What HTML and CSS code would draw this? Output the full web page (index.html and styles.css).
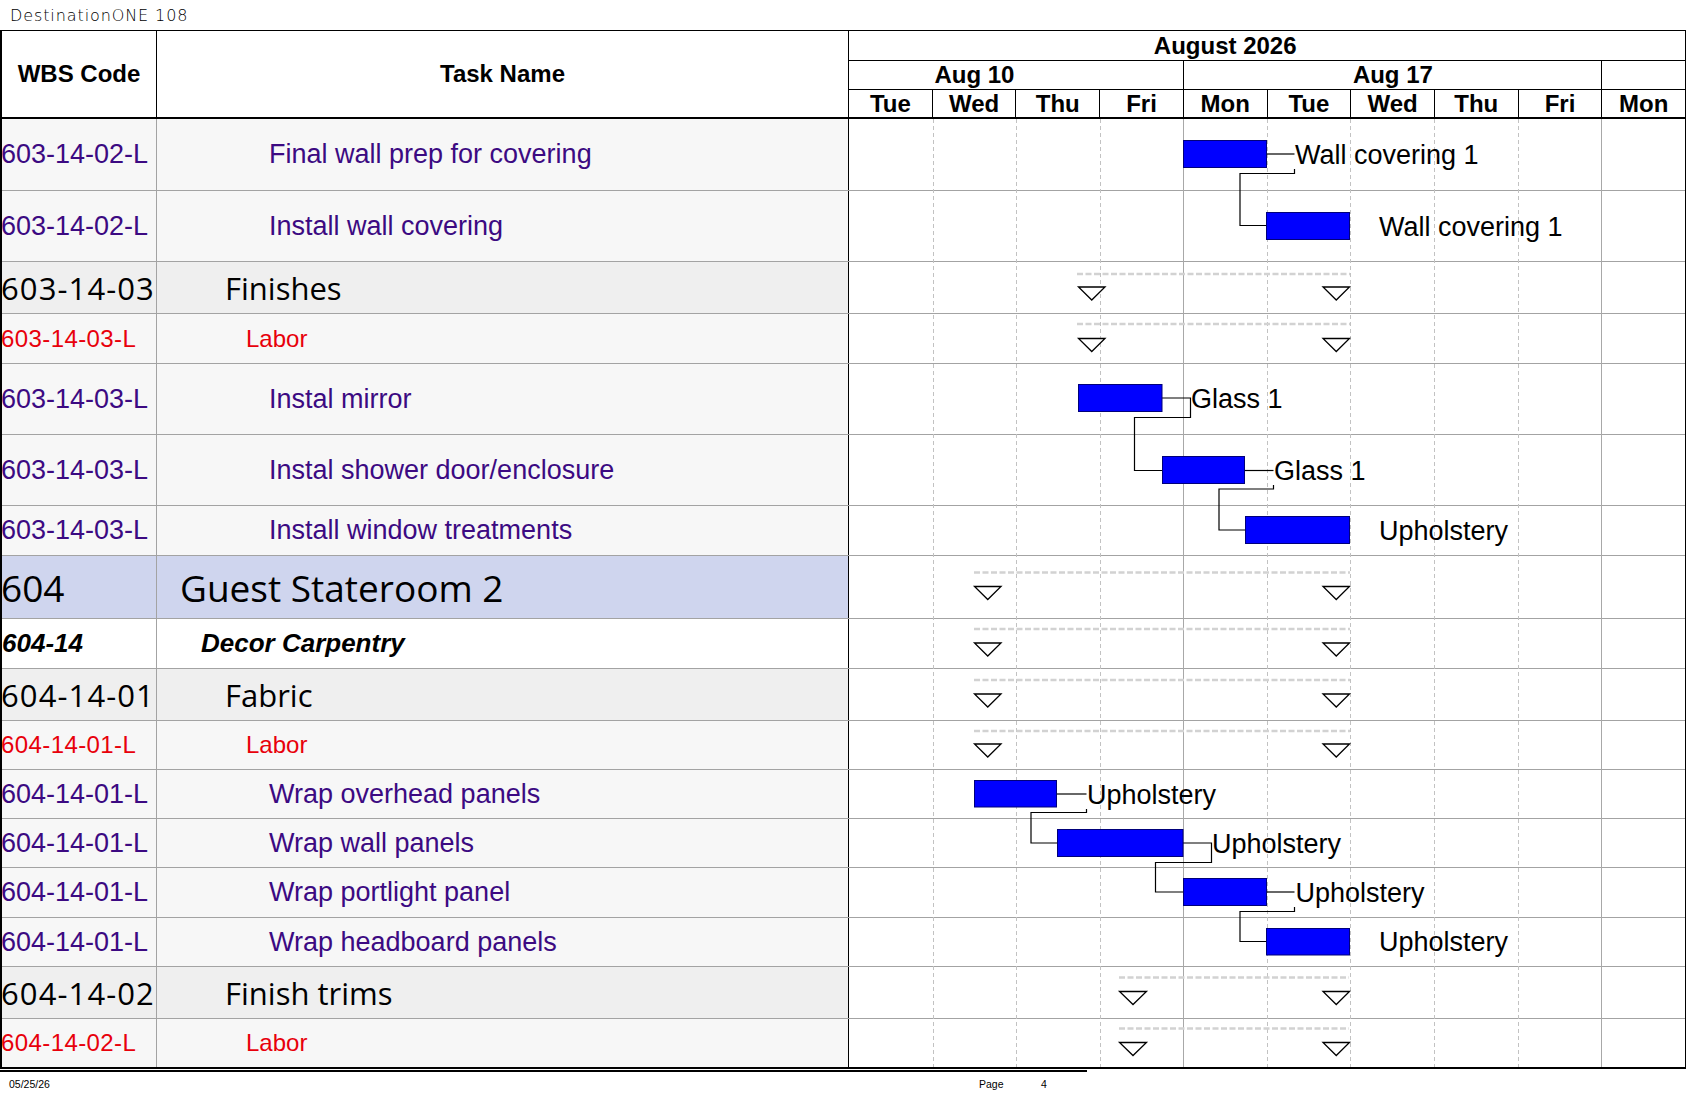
FILE: index.html
```html
<!DOCTYPE html>
<html>
<head>
<meta charset="utf-8">
<title>DestinationONE 108</title>
<link rel="stylesheet" href="styles.css">
</head>
<body>
<div class="title">DestinationONE 108</div>
<div class="sheet">
  <div class="head">
    <div class="h-wbs">WBS Code</div>
    <div class="h-task">Task Name</div>
    <div class="h-gantt">
      <div class="h-month"><div class="month">August 2026</div><div class="month-rest"></div></div>
      <div class="h-week"><div class="week w1">Aug 10</div><div class="week w2">Aug 17</div><div class="week w3"></div></div>
      <div class="h-days">
        <div class="day">Tue</div><div class="day">Wed</div><div class="day">Thu</div><div class="day">Fri</div><div class="day">Mon</div>
        <div class="day">Tue</div><div class="day">Wed</div><div class="day">Thu</div><div class="day">Fri</div><div class="day">Mon</div>
      </div>
    </div>
  </div>
  <div class="rows">
    <div class="row t-task h72"><div class="c-wbs">603-14-02-L</div><div class="c-task">Final wall prep for covering</div><div class="c-gantt"></div></div>
    <div class="row t-task h71"><div class="c-wbs">603-14-02-L</div><div class="c-task">Install wall covering</div><div class="c-gantt"></div></div>
    <div class="row t-l3 h52"><div class="c-wbs">603-14-03</div><div class="c-task">Finishes</div><div class="c-gantt"></div></div>
    <div class="row t-labor h50"><div class="c-wbs">603-14-03-L</div><div class="c-task">Labor</div><div class="c-gantt"></div></div>
    <div class="row t-task h71"><div class="c-wbs">603-14-03-L</div><div class="c-task">Instal mirror</div><div class="c-gantt"></div></div>
    <div class="row t-task h71"><div class="c-wbs">603-14-03-L</div><div class="c-task">Instal shower door/enclosure</div><div class="c-gantt"></div></div>
    <div class="row t-task h50"><div class="c-wbs">603-14-03-L</div><div class="c-task">Install window treatments</div><div class="c-gantt"></div></div>
    <div class="row t-l1 h63"><div class="c-wbs">604</div><div class="c-task">Guest Stateroom 2</div><div class="c-gantt"></div></div>
    <div class="row t-l2 h50"><div class="c-wbs">604-14</div><div class="c-task">Decor Carpentry</div><div class="c-gantt"></div></div>
    <div class="row t-l3 h52"><div class="c-wbs">604-14-01</div><div class="c-task">Fabric</div><div class="c-gantt"></div></div>
    <div class="row t-labor h49"><div class="c-wbs">604-14-01-L</div><div class="c-task">Labor</div><div class="c-gantt"></div></div>
    <div class="row t-task h49"><div class="c-wbs">604-14-01-L</div><div class="c-task">Wrap overhead panels</div><div class="c-gantt"></div></div>
    <div class="row t-task h49"><div class="c-wbs">604-14-01-L</div><div class="c-task">Wrap wall panels</div><div class="c-gantt"></div></div>
    <div class="row t-task h50"><div class="c-wbs">604-14-01-L</div><div class="c-task">Wrap portlight panel</div><div class="c-gantt"></div></div>
    <div class="row t-task h49"><div class="c-wbs">604-14-01-L</div><div class="c-task">Wrap headboard panels</div><div class="c-gantt"></div></div>
    <div class="row t-l3 h52"><div class="c-wbs">604-14-02</div><div class="c-task">Finish trims</div><div class="c-gantt"></div></div>
    <div class="row t-labor h48 last"><div class="c-wbs">604-14-02-L</div><div class="c-task">Labor</div><div class="c-gantt"></div></div>

    <svg class="chart" width="836" height="948" viewBox="0 0 836 948" xmlns="http://www.w3.org/2000/svg">
      <g class="grid-dash" stroke="#c2c2c2" stroke-width="1" stroke-dasharray="4 3">
        <line x1="84.5" y1="0" x2="84.5" y2="948"/>
        <line x1="167.5" y1="0" x2="167.5" y2="948"/>
        <line x1="251.5" y1="0" x2="251.5" y2="948"/>
        <line x1="418.5" y1="0" x2="418.5" y2="948"/>
        <line x1="501.5" y1="0" x2="501.5" y2="948"/>
        <line x1="585.5" y1="0" x2="585.5" y2="948"/>
        <line x1="669.5" y1="0" x2="669.5" y2="948"/>
      </g>
      <g stroke="#a8a8a8" stroke-width="1">
        <line x1="334.5" y1="0" x2="334.5" y2="948"/>
        <line x1="752.5" y1="0" x2="752.5" y2="948"/>
      </g>

      <g fill="none" stroke="#d2d2d2" stroke-width="2.5" stroke-dasharray="6 2.5">
        <line x1="228" y1="155" x2="501" y2="155"/>
        <line x1="228" y1="205" x2="501" y2="205"/>
        <line x1="125" y1="453.5" x2="501" y2="453.5"/>
        <line x1="125" y1="510" x2="501" y2="510"/>
        <line x1="125" y1="561" x2="501" y2="561"/>
        <line x1="125" y1="612" x2="501" y2="612"/>
        <line x1="270" y1="858.5" x2="500" y2="858.5"/>
        <line x1="270" y1="909.5" x2="500" y2="909.5"/>
      </g>

      <g fill="#fff" stroke="#000" stroke-width="1.3" stroke-linejoin="miter">
        <polygon points="229.5,168 256,168 242.75,181"/>
        <polygon points="474,168 500.5,168 487.25,181"/>
        <polygon points="229.5,219.5 256,219.5 242.75,232.5"/>
        <polygon points="474,219.5 500.5,219.5 487.25,232.5"/>
        <polygon points="125.5,467.5 152,467.5 138.75,480.5"/>
        <polygon points="474,467.5 500.5,467.5 487.25,480.5"/>
        <polygon points="125.5,524 152,524 138.75,537"/>
        <polygon points="474,524 500.5,524 487.25,537"/>
        <polygon points="125.5,575 152,575 138.75,588"/>
        <polygon points="474,575 500.5,575 487.25,588"/>
        <polygon points="125.5,625 152,625 138.75,638"/>
        <polygon points="474,625 500.5,625 487.25,638"/>
        <polygon points="270.5,872.5 297.5,872.5 284,885.5"/>
        <polygon points="474,872.5 500.5,872.5 487.25,885.5"/>
        <polygon points="270.5,923.5 297.5,923.5 284,936.5"/>
        <polygon points="474,923.5 500.5,923.5 487.25,936.5"/>
      </g>

      <g fill="none" stroke="#000" stroke-width="1.2">
        <path d="M417.5 35 H445.5"/>
        <path d="M445.5 50 V54.5 H391 V106.5 H417.5"/>
        <path d="M313 279 H341.5 V298.5 H285.5 V351.5 H313.5"/>
        <path d="M395.5 351.5 H424.5"/>
        <path d="M424.5 366 V370 H370 V411 H396.5"/>
        <path d="M207.5 675 H237.5"/>
        <path d="M237.5 690 V693.5 H182 V724 H208.5"/>
        <path d="M334 724 H362.5 V743.5 H306.5 V773 H334.5"/>
        <path d="M417.5 773 H445.5"/>
        <path d="M445.5 788 V792.5 H391 V822.5 H417.5"/>
      </g>

      <g fill="#0000ff" stroke="#00007a" stroke-width="1">
        <rect x="334.5" y="21.5" width="83" height="27"/>
        <rect x="417.5" y="93.5" width="83" height="27"/>
        <rect x="229.5" y="265.5" width="83.5" height="27"/>
        <rect x="313.5" y="337.5" width="82" height="27"/>
        <rect x="396.5" y="397.5" width="104" height="27"/>
        <rect x="125.5" y="661.5" width="82" height="26.5"/>
        <rect x="208.5" y="710.5" width="125.5" height="27"/>
        <rect x="334.5" y="759.5" width="83" height="27"/>
        <rect x="417.5" y="809.5" width="83" height="26.5"/>
      </g>

      <g class="labels" fill="#000">
        <text x="446" y="44.5">Wall covering 1</text>
        <text x="530" y="117">Wall covering 1</text>
        <text x="342" y="288.5">Glass 1</text>
        <text x="425" y="361">Glass 1</text>
        <text x="530" y="421">Upholstery</text>
        <text x="238" y="684.5">Upholstery</text>
        <text x="363" y="733.5">Upholstery</text>
        <text x="446.5" y="782.5">Upholstery</text>
        <text x="530" y="832">Upholstery</text>
      </g>
    </svg>
  </div>
</div>
<div class="footer">
  <span class="f-date">05/25/26</span>
  <span class="f-page">Page</span>
  <span class="f-num">4</span>
</div>
</body>
</html>
```

FILE: styles.css
```css
html, body {
  margin: 0;
  padding: 0;
  background: #ffffff;
}

body {
  font-family: "Liberation Sans", Arial, sans-serif;
  color: #000;
  width: 1687px;
}

.title {
  height: 29px;
  padding-top: 1px;
  padding-left: 10px;
  font-family: "DejaVu Sans", sans-serif;
  font-weight: 200;
  font-size: 16px;
  letter-spacing: 0.9px;
  line-height: 30px;
  color: #000;
  box-sizing: content-box;
}

.sheet {
  width: 1686px;
  box-sizing: border-box;
  border-top: 1px solid #000;
  border-left: 2px solid #000;
  border-right: 1px solid #000;
  border-bottom: 2px solid #000;
}

/* ---------- header ---------- */
.head {
  display: flex;
  height: 88px;
  box-sizing: border-box;
  border-bottom: 2px solid #000;
  font-weight: bold;
  font-size: 24px;
}

.h-wbs,
.h-task {
  display: flex;
  align-items: center;
  justify-content: center;
  box-sizing: border-box;
  border-right: 1px solid #000;
}

.h-wbs { width: 155px; }
.h-task { width: 692px; }

.h-gantt {
  flex: 1;
  display: flex;
  flex-direction: column;
}

.h-month,
.h-week,
.h-days {
  display: flex;
  box-sizing: border-box;
}

.h-month {
  height: 30px;
  border-bottom: 1px solid #000;
}

.month {
  width: 752.4px;
  display: flex;
  align-items: center;
  justify-content: center;
}

.month-rest { flex: 1; }

.h-week {
  height: 29px;
  border-bottom: 1px solid #000;
}

.week {
  display: flex;
  align-items: center;
  justify-content: center;
  box-sizing: border-box;
}

.w1 {
  width: 334.4px;
  padding-right: 83.6px;
}

.w2 {
  width: 418px;
  border-left: 1px solid #000;
}

.w3 {
  flex: 1;
  border-left: 1px solid #000;
}

.h-days { height: 27px; }

.day {
  flex: 1 1 0;
  display: flex;
  align-items: center;
  justify-content: center;
  box-sizing: border-box;
  border-left: 1px solid #000;
}

.day:first-child { border-left: none; }

/* ---------- body rows ---------- */
.rows {
  position: relative;
}

.row {
  display: flex;
  box-sizing: border-box;
  border-bottom: 1px solid #a3a3a3;
}

.row.last { border-bottom: none; }

.h72 { height: 72px; }
.h71 { height: 71px; }
.h63 { height: 63px; }
.h52 { height: 52px; }
.h50 { height: 50px; }
.h49 { height: 49px; }
.h48 { height: 48px; }

.c-wbs,
.c-task {
  display: flex;
  align-items: center;
  box-sizing: border-box;
  overflow: hidden;
  white-space: nowrap;
}

.c-wbs {
  width: 155px;
  border-right: 1px solid #a3a3a3;
}

.c-task {
  width: 692px;
  border-right: 1px solid #000;
}

.c-gantt {
  flex: 1;
  background: #fff;
}

/* task rows */
.t-task .c-wbs,
.t-task .c-task {
  background: #f7f7f7;
  color: #3c0a82;
  font-size: 27px;
}

.t-task .c-wbs {
  text-indent: -1px;
}

.t-task .c-task { padding-left: 112px; }

/* labor rows */
.t-labor .c-wbs,
.t-labor .c-task {
  background: #f7f7f7;
  color: #e8000b;
  font-size: 24px;
}

.t-labor .c-wbs {
  letter-spacing: 0.4px;
  text-indent: -1px;
}

.t-labor .c-task { padding-left: 89px; }

/* level 3 summaries */
.t-l3 .c-wbs,
.t-l3 .c-task {
  background: #efefef;
  font-family: "Open Sans", "Noto Sans", sans-serif;
  font-size: 31px;
  color: #000;
}

.t-l3 .c-wbs {
  letter-spacing: 1.1px;
  text-indent: -1px;
}

.t-l3 .c-task { padding-left: 68px; }

/* level 1 summary */
.t-l1 .c-wbs,
.t-l1 .c-task {
  background: #cfd5ee;
  font-family: "Open Sans", "Noto Sans", sans-serif;
  font-size: 37px;
  color: #000;
}

.t-l1 .c-wbs { text-indent: -1px; }
.t-l1 .c-task { padding-left: 23px; }

/* level 2 summary */
.t-l2 .c-wbs,
.t-l2 .c-task {
  background: #fff;
  font-weight: bold;
  font-style: italic;
  font-size: 26px;
  color: #000;
}

.t-l2 .c-task { padding-left: 44px; }

/* chart overlay */
.chart {
  position: absolute;
  left: 847px;
  top: 0;
  display: block;
}

.labels text {
  font-family: "Liberation Sans", Arial, sans-serif;
  font-size: 27px;
}

/* ---------- footer ---------- */
.footer {
  width: 1087px;
  margin-top: 1px;
  border-top: 2px solid #000;
  display: flex;
  padding-top: 6px;
  font-size: 10.5px;
  line-height: 12px;
  color: #000;
}

.f-date {
  width: 970px;
  padding-left: 9px;
}

.f-page { width: 62px; }
```
